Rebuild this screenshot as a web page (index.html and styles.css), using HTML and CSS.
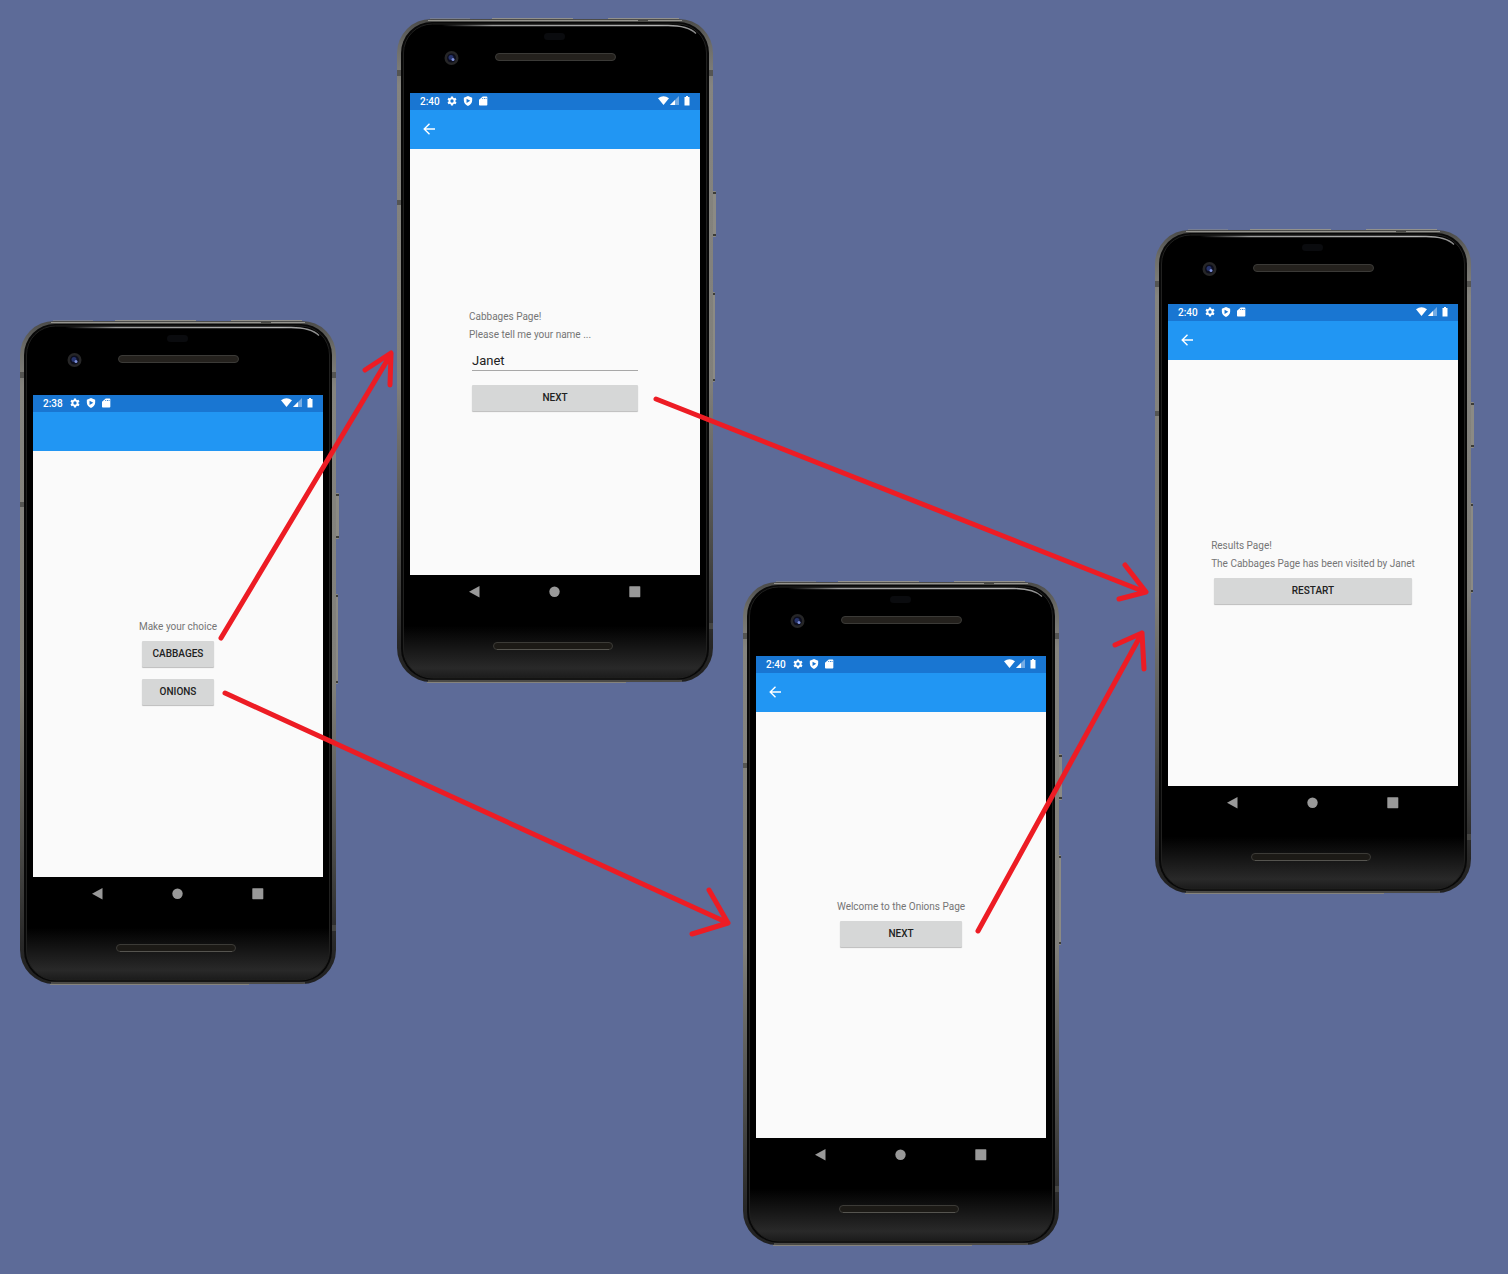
FILE: index.html
```html
<!DOCTYPE html>
<html lang="en">
<head>
<meta charset="utf-8">
<meta name="viewport" content="width=device-width, initial-scale=1">
<title>Page navigation</title>
<link rel="stylesheet" href="styles.css">
</head>
<body>
<svg class="defs" aria-hidden="true">
  <defs>
    <linearGradient id="edge" x1="0" y1="0" x2="0" y2="1">
      <stop offset="0" stop-color="#4a4a48"/>
      <stop offset=".04" stop-color="#6d6d69"/>
      <stop offset=".1" stop-color="#85847f"/>
      <stop offset=".55" stop-color="#807f7a"/>
      <stop offset=".8" stop-color="#4a4a48"/>
      <stop offset=".94" stop-color="#282828"/>
      <stop offset="1" stop-color="#202020"/>
    </linearGradient>
    <linearGradient id="chin" x1="0" y1="0" x2="0" y2="1">
      <stop offset="0" stop-color="#000"/>
      <stop offset=".92" stop-color="#000"/>
      <stop offset=".985" stop-color="#292929"/>
      <stop offset="1" stop-color="#1b1b1b"/>
    </linearGradient>
    <linearGradient id="shine" x1="0" y1="0" x2="1" y2="0">
      <stop offset="0" stop-color="#999" stop-opacity="0"/>
      <stop offset=".2" stop-color="#999"/>
      <stop offset=".85" stop-color="#b4b4b4"/>
      <stop offset="1" stop-color="#888"/>
    </linearGradient>
    <symbol id="hardware" viewBox="0 0 320 665">
      <path d="M33 2V.5h40V2zM95 2V0h81v2zM211 2V0h71v2z" fill="#92918c"/>
      <path d="M30 664h199v1H30z" fill="#85837d"/>
      <rect x="315" y="173" width="4" height="46" rx="1" fill="#8b8a84"/>
      <rect x="315" y="274" width="3" height="90" rx="1" fill="#8b8a84"/>
      <path d="M316 174h3v2h-3zM316 216h3v2h-3zM316 275h2v2h-2zM316 361h2v2h-2z" fill="#3c3c38"/>
      <rect x="0" y="1" width="316" height="663" rx="34" fill="url(#edge)"/>
      <path d="M31 2.500h254" stroke="#96958f"/>
      <path d="M31 663h254" stroke="#76746f"/>
      <path d="M0 52h4v6H0zM0 182h4v5H0zM312 52h4v6h-4zM312 605h4v6h-4z" fill="#4b4b48" fill-opacity=".8"/>
      <path d="M241 2h10v2h-10zM51 662h10v2H51zM255 662h10v2h-10z" fill="#4a4a46"/>
      <rect x="4" y="4" width="308" height="657.500" rx="31" fill="#080808"/>
      <rect x="6.500" y="6" width="303" height="654" rx="29" fill="url(#chin)" stroke="#20201f"/>
      <path d="M45 7.500h226q20 0 28 8" fill="none" stroke="url(#shine)" stroke-width="1.300"/>
      <rect x="147" y="15" width="21" height="7" rx="3.500" fill="#0a0b0e"/>
      <circle cx="54.500" cy="40" r="7" fill="#262627"/>
      <circle cx="54.500" cy="40" r="4.500" fill="#0d0e1d"/>
      <circle cx="54" cy="39.500" r="2.500" fill="#26336b"/>
      <circle cx="56" cy="41.500" r="1.500" fill="#7f91dc"/>
      <rect x="98.500" y="35.500" width="120" height="7" rx="3.500" fill="#24211d" stroke="#3b3a37"/>
      <rect x="96.500" y="624.500" width="119" height="7" rx="3.500" fill="#1c1a16" stroke="#3c3b37"/>
      <path d="M100 631.500h112" stroke="#55544f"/>
    </symbol>
    <symbol id="gear" viewBox="0 0 24 24">
      <path fill-rule="evenodd" d="M9.500 1h5l.6 3.300 2 1.200 3.200-1.200 2.500 4.300L20.200 11v2l2.600 2.400-2.500 4.300-3.200-1.200-2 1.200-.6 3.300h-5l-.6-3.300-2-1.200-3.200 1.200-2.500-4.300L3.800 13v-2L1.200 8.600l2.500-4.300 3.200 1.200 2-1.200zM12 8a4 4 0 1 0 0 8 4 4 0 0 0 0-8z"/>
    </symbol>
    <symbol id="shield" viewBox="0 0 24 24">
      <path fill-rule="evenodd" d="M12 0l10 4v7c0 6-4 11-10 13C6 22 2 17 2 11V4zM8.500 6.500v10l9-5z"/>
    </symbol>
    <symbol id="card" viewBox="0 0 24 24">
      <path fill-rule="evenodd" d="M9 1h9q2 0 2 2v18q0 2-2 2H2q-2 0-2-2V9zM8 4.500V7h2V4.500zm4 0V7h2V4.500zm4 0V7h2V4.500z"/>
    </symbol>
    <symbol id="signals" viewBox="0 0 32 10">
      <path d="M0 2.200Q5.500-1.800 11 2.200L5.500 9z"/>
      <path d="M21 0v9h-9z" fill-opacity=".4"/>
      <path d="M17 4v5h-5z"/>
      <path d="M26.500 1H28V0h2v1h1.500v8.500h-5z"/>
    </symbol>
    <symbol id="back" viewBox="0 0 12 12">
      <path d="M12 6H1.200M6.500.7L1.200 6l5.300 5.300" fill="none" stroke="#fff" stroke-width="1.400"/>
    </symbol>
    <symbol id="nav-back" viewBox="0 0 12 12"><path d="M10.500 0v11.500L0 5.700z"/></symbol>
    <symbol id="nav-home" viewBox="0 0 12 12"><circle cx="5.500" cy="5.700" r="5.200"/></symbol>
    <symbol id="nav-recent" viewBox="0 0 12 12"><rect x=".3" y=".2" width="11" height="11" rx=".6"/></symbol>
  </defs>
</svg>

<main class="canvas">
  <section class="phone phone-start">
    <svg class="hardware"><use href="#hardware"/></svg>
    <div class="screen">
      <div class="status"><span class="time">2:38</span><svg class="tray"><use href="#gear"/></svg><svg class="tray"><use href="#shield"/></svg><svg class="tray"><use href="#card"/></svg><svg class="signals"><use href="#signals"/></svg></div>
      <header class="appbar"></header>
      <div class="content">
        <div class="stack">
          <p class="label">Make your choice</p>
          <button class="action" type="button">CABBAGES</button>
          <button class="action" type="button">ONIONS</button>
        </div>
      </div>
    </div>
    <nav class="keys">
      <button class="key" type="button" aria-label="Back"><svg><use href="#nav-back"/></svg></button>
      <button class="key" type="button" aria-label="Home"><svg><use href="#nav-home"/></svg></button>
      <button class="key" type="button" aria-label="Recent"><svg><use href="#nav-recent"/></svg></button>
    </nav>
  </section>

  <section class="phone phone-cabbages">
    <svg class="hardware"><use href="#hardware"/></svg>
    <div class="screen">
      <div class="status"><span class="time">2:40</span><svg class="tray"><use href="#gear"/></svg><svg class="tray"><use href="#shield"/></svg><svg class="tray"><use href="#card"/></svg><svg class="signals"><use href="#signals"/></svg></div>
      <header class="appbar"><button class="up" type="button" aria-label="Back"><svg><use href="#back"/></svg></button></header>
      <div class="content">
        <div class="stack stack-form">
          <p class="label">Cabbages Page!</p>
          <label class="label" for="name">Please tell me your name ...</label>
          <input class="entry" id="name" type="text" value="Janet">
          <button class="action" type="button">NEXT</button>
        </div>
      </div>
    </div>
    <nav class="keys">
      <button class="key" type="button" aria-label="Back"><svg><use href="#nav-back"/></svg></button>
      <button class="key" type="button" aria-label="Home"><svg><use href="#nav-home"/></svg></button>
      <button class="key" type="button" aria-label="Recent"><svg><use href="#nav-recent"/></svg></button>
    </nav>
  </section>

  <section class="phone phone-onions">
    <svg class="hardware"><use href="#hardware"/></svg>
    <div class="screen">
      <div class="status"><span class="time">2:40</span><svg class="tray"><use href="#gear"/></svg><svg class="tray"><use href="#shield"/></svg><svg class="tray"><use href="#card"/></svg><svg class="signals"><use href="#signals"/></svg></div>
      <header class="appbar"><button class="up" type="button" aria-label="Back"><svg><use href="#back"/></svg></button></header>
      <div class="content">
        <div class="stack">
          <p class="label">Welcome to the Onions Page</p>
          <button class="action" type="button">NEXT</button>
        </div>
      </div>
    </div>
    <nav class="keys">
      <button class="key" type="button" aria-label="Back"><svg><use href="#nav-back"/></svg></button>
      <button class="key" type="button" aria-label="Home"><svg><use href="#nav-home"/></svg></button>
      <button class="key" type="button" aria-label="Recent"><svg><use href="#nav-recent"/></svg></button>
    </nav>
  </section>

  <section class="phone phone-results">
    <svg class="hardware"><use href="#hardware"/></svg>
    <div class="screen">
      <div class="status"><span class="time">2:40</span><svg class="tray"><use href="#gear"/></svg><svg class="tray"><use href="#shield"/></svg><svg class="tray"><use href="#card"/></svg><svg class="signals"><use href="#signals"/></svg></div>
      <header class="appbar"><button class="up" type="button" aria-label="Back"><svg><use href="#back"/></svg></button></header>
      <div class="content">
        <div class="stack">
          <p class="label">Results Page!</p>
          <p class="label">The Cabbages Page has been visited by Janet</p>
          <button class="action" type="button">RESTART</button>
        </div>
      </div>
    </div>
    <nav class="keys">
      <button class="key" type="button" aria-label="Back"><svg><use href="#nav-back"/></svg></button>
      <button class="key" type="button" aria-label="Home"><svg><use href="#nav-home"/></svg></button>
      <button class="key" type="button" aria-label="Recent"><svg><use href="#nav-recent"/></svg></button>
    </nav>
  </section>

  <svg class="arrows" aria-hidden="true">
    <path d="M221 638L391 354M365 370L391 353L390 385"/>
    <path d="M656 399L1145 592M1125 565L1146 592L1119 599"/>
    <path d="M225 693L728 923M709 890L728 923L692 934"/>
    <path d="M978 931L1142 633M1115 645L1142 633L1144 669"/>
  </svg>
</main>
</body>
</html>
```
FILE: styles.css
```css
* {
  box-sizing: border-box;
}

body {
  margin: 0;
  background: #5d6b98;
  font-family: Roboto, "Liberation Sans", sans-serif;
  font-size: 10px;
  line-height: 12px;
}

button {
  border: 0;
  padding: 0;
  font: inherit;
}

svg {
  display: block;
}

.defs {
  position: absolute;
  width: 0;
  height: 0;
}

.canvas {
  position: relative;
  min-height: 100vh;
}

.phone {
  position: absolute;
  width: 316px;
  padding: 75px 13px;
}

.phone-start {
  left: 20px;
  top: 320px;
}

.phone-cabbages {
  left: 397px;
  top: 18px;
}

.phone-onions {
  left: 743px;
  top: 581px;
}

.phone-results {
  left: 1155px;
  top: 229px;
}

.hardware {
  position: absolute;
  left: 0;
  top: 0;
  width: 320px;
  height: 665px;
}

.screen {
  position: relative;
  background: #fafafa;
}

.status {
  display: flex;
  align-items: center;
  gap: 6px;
  height: 17px;
  padding: 0 10px 1px;
  background: #1976d2;
  color: #fff;
  fill: #fff;
}

.time {
  width: 21px;
  padding-top: 1px;
  font-weight: 500;
}

.tray {
  width: 10px;
  height: 10px;
}

.signals {
  width: 32px;
  height: 10px;
  margin-left: auto;
}

.appbar {
  display: flex;
  align-items: center;
  height: 39px;
  padding: 0 13px 2px;
  background: #2196f3;
}

.up {
  background: none;
}

.up svg,
.key svg {
  width: 12px;
  height: 12px;
}

.content {
  display: flex;
  align-items: center;
  justify-content: center;
  height: 426px;
}

.stack {
  display: flex;
  flex-direction: column;
  gap: 6px;
}

.stack-form {
  width: 172px;
}

.label {
  height: 12px;
  margin: 0;
  color: #757575;
  line-height: 14px;
}

.action {
  height: 26px;
  margin: 3px;
  border-radius: 1px;
  background: #d6d7d7;
  box-shadow: 0 1px 1px rgba(0, 0, 0, 0.25);
  color: #212121;
  font-weight: 500;
}

.entry {
  height: 25px;
  margin: 0 3px 5px;
  padding: 4px 0 0;
  border: 0;
  border-bottom: 1px solid #a8a8a8;
  background: none;
  color: #212121;
  font: inherit;
  font-size: 13px;
}

.keys {
  position: relative;
  display: grid;
  grid-template-columns: repeat(3, 80px);
  justify-content: center;
  padding-top: 11px;
}

.key {
  display: flex;
  justify-content: center;
  background: none;
  fill: #999;
}

.arrows {
  position: absolute;
  left: 0;
  top: 0;
  width: 100%;
  height: 100%;
  overflow: visible;
  pointer-events: none;
  fill: none;
  stroke: #ed1c24;
  stroke-width: 5;
  stroke-linecap: round;
  stroke-linejoin: round;
}
```
